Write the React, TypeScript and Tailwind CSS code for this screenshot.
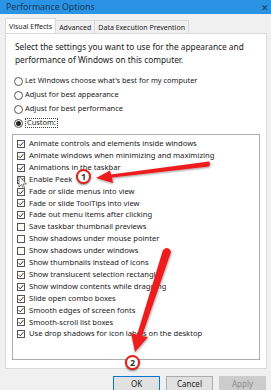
import React from "react";

const items: [string, boolean][] = [
  ["Animate controls and elements inside windows", true],
  ["Animate windows when minimizing and maximizing", true],
  ["Animations in the taskbar", true],
  ["Enable Peek", true],
  ["Fade or slide menus into view", true],
  ["Fade or slide ToolTips into view", true],
  ["Fade out menu items after clicking", true],
  ["Save taskbar thumbnail previews", false],
  ["Show shadows under mouse pointer", false],
  ["Show shadows under windows", false],
  ["Show thumbnails instead of icons", true],
  ["Show translucent selection rectangle", true],
  ["Show window contents while dragging", true],
  ["Slide open combo boxes", true],
  ["Smooth edges of screen fonts", true],
  ["Smooth-scroll list boxes", true],
  ["Use drop shadows for icon labels on the desktop", true],
];

function Check({ on }: { on: boolean }) {
  return (
    <span className="w-[8px] h-[8px] border border-[#555] bg-white flex items-center justify-center shrink-0">
      {on && (
        <svg width="6" height="6" viewBox="0 0 6 6">
          <path d="M0.6 3.1 L2.3 4.8 L5.4 1.1" fill="none" stroke="#333" strokeWidth="1" />
        </svg>
      )}
    </span>
  );
}

function Radio({ on, children }: { on?: boolean; children: React.ReactNode }) {
  return (
    <div className="flex items-center h-[14px] gap-[2px]">
      <span className="w-[9px] h-[9px] rounded-full border border-[#555] bg-white flex items-center justify-center shrink-0">
        {on && <span className="w-[5px] h-[5px] rounded-full bg-[#222]" />}
      </span>
      {children}
    </div>
  );
}

function Badge({ n }: { n: string }) {
  return (
    <span className="w-[15px] h-[15px] rounded-full bg-white border-[2px] border-[#e0231b] flex items-center justify-center text-[9px] font-bold text-[#333] shadow-[0_1px_2px_rgba(0,0,0,0.5)]">
      {n}
    </span>
  );
}

export default function App() {
  return (
    <div
      className="relative w-[271px] h-[390px] overflow-hidden bg-[#f0f0f0] text-[#1a1a1a]"
      style={{ fontFamily: '"Noto Sans", "Open Sans", sans-serif' }}
    >
      {/* title bar */}
      <div className="h-[14px] bg-[#2b93e4] flex items-center justify-between pl-[6px] pr-[2px]">
        <span className="text-[8.8px] leading-none text-[#163a5c]">Performance Options</span>
        <span className="text-[9px] leading-none text-[#163a5c]">✕</span>
      </div>

      <div className="px-[5px] pr-[4px] pt-[4px]">
        {/* tabs */}
        <div className="flex items-end h-[15px] text-[7px] leading-none whitespace-nowrap">
          <div className="h-[15px] px-[3px] bg-white border border-b-0 border-[#d9d9d9] flex items-center">Visual Effects</div>
          <div className="h-[13px] px-[3px] bg-[#f0f0f0] border border-b-0 border-l-0 border-[#d9d9d9] flex items-center">Advanced</div>
          <div className="h-[13px] px-[3px] bg-[#f0f0f0] border border-b-0 border-l-0 border-[#d9d9d9] flex items-center">Data Execution Prevention</div>
        </div>

        {/* panel */}
        <div className="h-[336px] bg-white border border-[#d9d9d9] px-[6px] pt-[6px]">
          <p className="text-[8.3px] leading-[13px] pl-[3px]">
            Select the settings you want to use for the appearance and
            <br />
            performance of Windows on this computer.
          </p>
          <div className="mt-[8px] pl-[2px] text-[7.4px] leading-none flex flex-col">
            <Radio><span>Let Windows choose what's best for my computer</span></Radio>
            <Radio><span>Adjust for best appearance</span></Radio>
            <Radio><span>Adjust for best performance</span></Radio>
            <Radio on><span className="border border-dotted border-[#444] px-[1px]">Custom:</span></Radio>
          </div>
          <div className="mt-[4px] h-[226px] w-[248px] border border-[#adadad] pt-[3px] pl-[4px] text-[7.6px] leading-none">
            {items.map(([label, on]) => (
              <div key={label} className="h-[11.9px] flex items-center gap-[4px]">
                <Check on={on} />
                <span className="whitespace-nowrap">{label}</span>
              </div>
            ))}
          </div>
        </div>

        {/* buttons */}
        <div className="flex justify-end gap-[6px] pt-[7px] pr-[1px] text-[8px] leading-none">
          <div className="w-[47px] h-[15px] border border-[#0078d7] bg-[#e1e1e1] flex items-center justify-center">OK</div>
          <div className="w-[47px] h-[15px] border border-[#adadad] bg-[#e1e1e1] flex items-center justify-center">Cancel</div>
          <div className="w-[47px] h-[15px] border border-[#cccccc] bg-[#cccccc] text-[#8a8a8a] flex items-center justify-center">Apply</div>
        </div>
      </div>

      {/* overlays: arrows */}
      <svg className="absolute left-0 top-0 pointer-events-none" width="271" height="390">
        <defs>
          <filter id="sh" x="-20%" y="-20%" width="140%" height="140%">
            <feDropShadow dx="0.5" dy="1" stdDeviation="0.8" floodColor="#000" floodOpacity="0.4" />
          </filter>
        </defs>
        <g filter="url(#sh)" fill="#ee1c1c" stroke="none">
          <path d="M209 161.5 Q211 164 209 166.5 L112 177.5 L113 183 L96 178 L110 170.5 L111 174.5 Z" />
          <path d="M166 248 Q170 248 171 252 L142 336 L148 337 L135 352 L131 333 L137 335 L163 250 Z" />
        </g>
        {/* cursor */}
        <path d="M19 176 L19 187 L21.5 184.5 L23.5 189 L25 188.3 L23 184 L26.5 184 Z" fill="#fff" stroke="#222" strokeWidth="0.6" />
      </svg>
      <div className="absolute left-[76px] top-[169px]"><Badge n="1" /></div>
      <div className="absolute left-[125px] top-[355px]"><Badge n="2" /></div>
    </div>
  );
}
